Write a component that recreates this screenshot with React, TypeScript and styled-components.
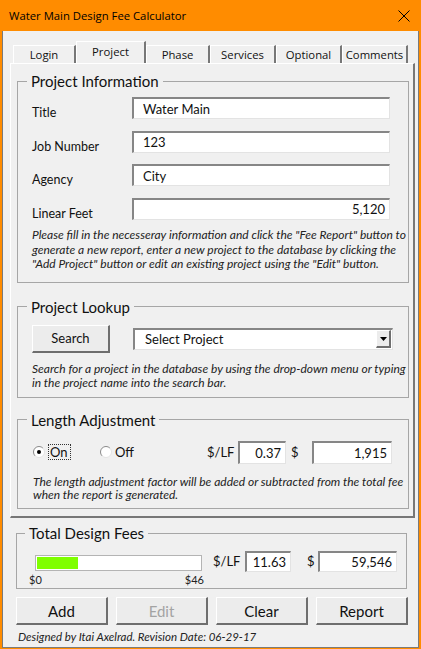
import React from "react";
import styled, { createGlobalStyle } from "styled-components";

const GlobalStyle = createGlobalStyle`
  html, body {
    margin: 0;
    padding: 0;
    background: #f0f0f0;
  }
  body {
    font-family: Lato, "Liberation Sans", sans-serif;
    color: #000;
  }
  * {
    box-sizing: border-box;
  }
`;

const Window = styled.div`
  width: 421px;
  height: 649px;
  background: #f0f0f0;
  border-left: 2px solid #ff8c00;
  border-right: 2px solid #ff8c00;
  border-bottom: 1px solid #ff8c00;
  display: flex;
  flex-direction: column;
  overflow: hidden;
`;

const TitleBar = styled.div`
  height: 31px;
  flex-shrink: 0;
  margin: 0 -2px;
  background: #ff8c00;
  display: flex;
  align-items: center;
  justify-content: space-between;
  padding: 0 11px 0 9px;
  font-family: "Open Sans", "Noto Sans", sans-serif;
  font-size: 11.3px;
`;

const Client = styled.div`
  flex: 1;
  display: flex;
  flex-direction: column;
  border: 1px solid #7a7a7a;
  border-top: none;
`;

const TabStrip = styled.div`
  display: flex;
  align-items: flex-end;
  height: 22px;
  margin: 10px 0 0 10px;
`;

const Tab = styled.div<{ $w: number; $active?: boolean }>`
  width: ${(p) => p.$w}px;
  height: ${(p) => (p.$active ? 22 : 18)}px;
  background: #f0f0f0;
  border-top: 1px solid #fff;
  border-left: 1px solid #fff;
  border-right: 2px solid #777;
  display: flex;
  align-items: center;
  justify-content: center;
  padding-bottom: ${(p) => (p.$active ? 3 : 1)}px;
  font-family: "Open Sans", "Noto Sans", sans-serif;
  font-size: 11.3px;
  color: #111;
`;

const Panel = styled.div`
  width: 405px;
  height: 455px;
  margin-left: 7px;
  border-top: 1px solid #fff;
  border-left: 1px solid #fff;
  border-right: 2px solid #777;
  border-bottom: 2px solid #777;
  padding: 8px 0 0 6px;
  display: flex;
  flex-direction: column;
`;

const Group = styled.fieldset<{ $w: number; $gap?: number }>`
  width: ${(p) => p.$w}px;
  margin: ${(p) => p.$gap ?? 0}px 0 0 0;
  padding: 0;
  min-width: 0;
  border: 1px solid #a6a6a6;
`;

const Legend = styled.legend<{ $offset: number }>`
  margin-left: ${(p) => p.$offset}px;
  padding: 0 4px;
  font-size: 15px;
  line-height: 18px;
  color: #111;
`;

const GroupBody = styled.div<{ $pad: string }>`
  padding: ${(p) => p.$pad};
  display: flex;
  flex-direction: column;
`;

const FieldRows = styled.div`
  display: flex;
  flex-direction: column;
  gap: 11.5px;
`;

const FieldRow = styled.div`
  display: flex;
  align-items: center;
  height: 22px;
`;

const Label = styled.div`
  width: 100px;
  padding-top: 9px;
  font-size: 12.5px;
  color: #111;
`;

const TextBox = styled.div<{ $w: number; $h?: number; $right?: boolean }>`
  width: ${(p) => p.$w}px;
  height: ${(p) => p.$h ?? 22}px;
  background: #fff;
  border-style: solid;
  border-width: 2px 1px 1px 2px;
  border-color: #868686 #e3e3e3 #e3e3e3 #868686;
  display: flex;
  align-items: center;
  justify-content: ${(p) => (p.$right ? "flex-end" : "flex-start")};
  padding: ${(p) => (p.$right ? "0 4px 0 0" : "0 0 0 9px")};
  font-size: 13px;
  color: #111;
  white-space: nowrap;
`;

const Note = styled.div<{ $top: number; $lh: number }>`
  margin-top: ${(p) => p.$top}px;
  font-size: 12px;
  line-height: ${(p) => p.$lh}px;
  font-style: italic;
  color: #222;
  white-space: nowrap;
`;

const RaisedButton = styled.div<{ $w: number; $size?: number; $disabled?: boolean }>`
  width: ${(p) => p.$w}px;
  height: 28px;
  flex-shrink: 0;
  background: #ececec;
  border-style: solid;
  border-width: 1px 2px 2px 1px;
  border-color: #fff #6e6e6e #6e6e6e #fff;
  display: flex;
  align-items: center;
  justify-content: center;
  font-size: ${(p) => p.$size ?? 13}px;
  color: ${(p) => (p.$disabled ? "#a3a3a3" : "#111")};
`;

const LookupRow = styled.div`
  display: flex;
  align-items: center;
  height: 28px;
  gap: 23px;
`;

const Combo = styled(TextBox)`
  justify-content: space-between;
  padding: 0 1px 0 10px;
`;

const DropButton = styled.div`
  width: 15px;
  height: 18px;
  background: #ececec;
  border-style: solid;
  border-width: 1px 2px 2px 1px;
  border-color: #fff #6e6e6e #6e6e6e #fff;
  display: flex;
  align-items: center;
  justify-content: center;
`;

const AdjustRow = styled.div`
  display: flex;
  align-items: center;
  height: 23px;
`;

const RadioOption = styled.div<{ $w: number }>`
  width: ${(p) => p.$w}px;
  display: flex;
  align-items: center;
  gap: 3px;
  font-size: 13px;
  color: #111;
`;

const Focus = styled.span`
  border: 1px dotted #333;
  padding: 0 2px 0 1px;
  line-height: 14px;
`;

const UnitLabel = styled.div<{ $w: number; $pad?: number }>`
  width: ${(p) => p.$w}px;
  padding-left: ${(p) => p.$pad ?? 0}px;
  font-size: 13px;
  color: #111;
`;

const TotalsRow = styled.div`
  display: flex;
  align-items: flex-start;
`;

const BarColumn = styled.div`
  width: 175px;
  display: flex;
  flex-direction: column;
  margin-right: 9px;
`;

const Bar = styled.div`
  margin: 4px 0 0 6px;
  width: 167px;
  height: 16px;
  background: #fff;
  border: 1px solid #b4b4b4;
  padding: 1px;
`;

const BarFill = styled.div`
  height: 100%;
  background: #7fff00;
`;

const Scale = styled.div`
  margin-top: 3px;
  display: flex;
  justify-content: space-between;
  font-size: 11px;
  line-height: 12px;
  color: #222;
`;

const TotalLabel = styled.div<{ $w: number; $pad?: number }>`
  width: ${(p) => p.$w}px;
  padding-left: ${(p) => p.$pad ?? 0}px;
  height: 21px;
  line-height: 21px;
  font-size: 13px;
  color: #111;
`;

const ButtonRow = styled.div`
  display: flex;
  gap: 8px;
  margin: 8px 0 0 13px;
`;

const Footer = styled.div`
  margin: 5px 0 0 15px;
  font-size: 11.5px;
  line-height: 14px;
  font-style: italic;
  color: #222;
`;

const CloseIcon = () => (
  <svg width="12" height="12" viewBox="0 0 12 12">
    <path d="M0.5 0.5 L11.5 11.5 M11.5 0.5 L0.5 11.5" stroke="#000" strokeWidth="1" fill="none" />
  </svg>
);

const Radio = ({ checked }: { checked?: boolean }) => (
  <svg width="12" height="12" viewBox="0 0 12 12">
    <circle cx="6" cy="6" r="5.5" fill="#fff" />
    <path d="M2.1 9.9 A5.5 5.5 0 0 1 9.9 2.1" stroke="#8a8a8a" strokeWidth="1" fill="none" />
    <path d="M9.9 2.1 A5.5 5.5 0 0 1 2.1 9.9" stroke="#e3e3e3" strokeWidth="1" fill="none" />
    {checked && <circle cx="6" cy="6" r="2" fill="#000" />}
  </svg>
);

const tabs = [
  { name: "Login", w: 63 },
  { name: "Project", w: 70, active: true },
  { name: "Phase", w: 64 },
  { name: "Services", w: 66 },
  { name: "Optional", w: 66 },
  { name: "Comments", w: 66 },
];

const fields = [
  { label: "Title", value: "Water Main" },
  { label: "Job Number", value: "123" },
  { label: "Agency", value: "City" },
  { label: "Linear Feet", value: "5,120", right: true },
];

const perFoot = 11.63;
const maxPerFoot = 46;

export default function App() {
  return (
    <>
      <GlobalStyle />
      <Window>
        <TitleBar>
          <span>Water Main Design Fee Calculator</span>
          <CloseIcon />
        </TitleBar>
        <Client>
          <TabStrip>
            {tabs.map((t) => (
              <Tab key={t.name} $w={t.w} $active={t.active}>
                {t.name}
              </Tab>
            ))}
          </TabStrip>
          <Panel>
            <Group $w={392}>
              <Legend $offset={9}>Project Information</Legend>
              <GroupBody $pad="7px 18px 10px 14px">
                <FieldRows>
                  {fields.map((f) => (
                    <FieldRow key={f.label}>
                      <Label>{f.label}</Label>
                      <TextBox $w={258} $right={f.right}>
                        {f.value}
                      </TextBox>
                    </FieldRow>
                  ))}
                </FieldRows>
                <Note $top={8.5} $lh={14.5}>
                  Please fill in the necesseray information and click the "Fee Report" button to
                  <br />
                  generate a new report, enter a new project to the database by clicking the
                  <br />
                  "Add Project" button or edit an existing project using the "Edit" button.
                </Note>
              </GroupBody>
            </Group>

            <Group $w={392} $gap={15}>
              <Legend $offset={9}>Project Lookup</Legend>
              <GroupBody $pad="9px 0 7px 14px">
                <LookupRow>
                  <RaisedButton $w={78}>Search</RaisedButton>
                  <Combo $w={260}>
                    <span>Select Project</span>
                    <DropButton>
                      <svg width="7" height="4" viewBox="0 0 7 4">
                        <polygon points="0,0 7,0 3.5,4" fill="#000" />
                      </svg>
                    </DropButton>
                  </Combo>
                </LookupRow>
                <Note $top={9} $lh={14}>
                  Search for a project in the database by using the drop-down menu or typing
                  <br />
                  in the project name into the search bar.
                </Note>
              </GroupBody>
            </Group>

            <Group $w={392} $gap={13}>
              <Legend $offset={9}>Length Adjustment</Legend>
              <GroupBody $pad="12px 0 6px 15px">
                <AdjustRow>
                  <RadioOption $w={67}>
                    <Radio checked />
                    <Focus>On</Focus>
                  </RadioOption>
                  <RadioOption $w={107}>
                    <Radio />
                    <span>Off</span>
                  </RadioOption>
                  <UnitLabel $w={31}>$/LF</UnitLabel>
                  <TextBox $w={48} $h={23} $right>
                    0.37
                  </TextBox>
                  <UnitLabel $w={26} $pad={5}>
                    $
                  </UnitLabel>
                  <TextBox $w={80} $h={23} $right>
                    1,915
                  </TextBox>
                </AdjustRow>
                <Note $top={11} $lh={13.5}>
                  The length adjustment factor will be added or subtracted from the total fee
                  <br />
                  when the report is generated.
                </Note>
              </GroupBody>
            </Group>
          </Panel>

          <Group $w={391} $gap={6} style={{ marginLeft: 13 }}>
            <Legend $offset={8}>Total Design Fees</Legend>
            <GroupBody $pad="9px 0 2px 12px">
              <TotalsRow>
                <BarColumn>
                  <Bar>
                    <BarFill style={{ width: `${(perFoot / maxPerFoot) * 100}%` }} />
                  </Bar>
                  <Scale>
                    <span>$0</span>
                    <span>$46</span>
                  </Scale>
                </BarColumn>
                <TotalLabel $w={32}>$/LF</TotalLabel>
                <TextBox $w={46} $h={21} $right>
                  11.63
                </TextBox>
                <TotalLabel $w={27} $pad={16}>
                  $
                </TotalLabel>
                <TextBox $w={79} $h={21} $right>
                  59,546
                </TextBox>
              </TotalsRow>
            </GroupBody>
          </Group>

          <ButtonRow>
            <RaisedButton $w={92} $size={15}>Add</RaisedButton>
            <RaisedButton $w={92} $size={15} $disabled>
              Edit
            </RaisedButton>
            <RaisedButton $w={92} $size={15}>Clear</RaisedButton>
            <RaisedButton $w={92} $size={15}>Report</RaisedButton>
          </ButtonRow>
          <Footer>Designed by Itai Axelrad. Revision Date: 06-29-17</Footer>
        </Client>
      </Window>
    </>
  );
}
